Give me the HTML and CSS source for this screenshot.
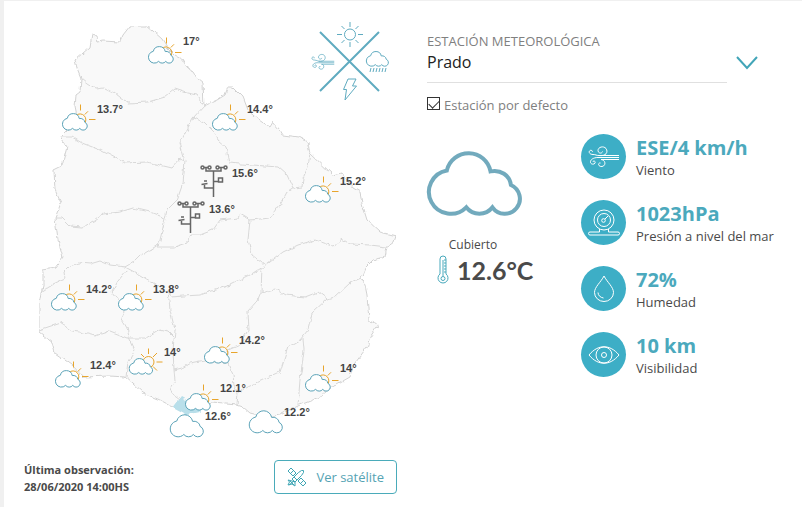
FILE: index.html
```html
<!DOCTYPE html>
<html lang="es">
<head>
    <meta charset="UTF-8">
    <meta name="viewport" content="width=device-width, initial-scale=1.0">
    <title>Estado del tiempo</title>
    <link rel="stylesheet" href="styles.css">
</head>
<body>
  <!-- shared icons -->
  <svg class="sprite" width="0" height="0" aria-hidden="true">
    <symbol id="cloud" viewBox="0 0 96 68" overflow="visible">
      <path vector-effect="non-scaling-stroke" d="M19 20A23 23 0 0 1 64 21A17 16 0 0 1 85 35A15.5 15.5 0 1 1 66 58A17 17 0 0 1 39 58A22.5 22.5 0 1 1 19 20Z"/>
    </symbol>
    <symbol id="sunCloud" viewBox="0 0 34 28">
      <path class="sun" d="M18.5 0.500V6.500M22.800 10.500l3.200-3.200M27 15.500h6.500M14 11.500A5.800 5.800 0 1 1 22 20"/>
      <use class="cloud" href="#cloud" x="0" y="9" width="26" height="18"/>
    </symbol>
    <symbol id="sunBig" viewBox="0 0 34 28">
      <path class="sun" d="M19.500 0.500V6M24 9l4-4M27.500 14h6M24 18.500l4 4M15 9l-3-3"/>
      <circle class="sun" cx="19.500" cy="14" r="5.500"/>
      <use class="cloud" href="#cloud" x="0" y="10" width="24" height="17"/>
    </symbol>
    <symbol id="tower" viewBox="0 0 28 33">
      <g fill="none" stroke="#666" stroke-width="1.500">
        <circle cx="2.500" cy="2.500" r="1.500"/><circle cx="9.500" cy="2.500" r="1.500"/>
        <circle cx="17.500" cy="2.500" r="1.500"/><circle cx="25.500" cy="2.500" r="1.500"/>
        <path d="M4 2.500h4M19 2.500h5M6 3v3h15V3M13.500 6v26M13.500 16.500h5M18.500 13h4v4h-4zM13.500 23h-9v-4M1.500 19.500l6-1M4 16l3 0"/>
      </g>
    </symbol>
    <symbol id="wind" viewBox="0 0 32 24">
      <path d="M31 11H12C8 11 8 9.500 5 9.500C2 9.500 0.500 7.500 1.500 6C2.500 4.500 5 5.500 4.300 7M31 13H10M31 15H14C18 15 18 21 14 21.500C10 22 9.500 17.500 12.500 18M10 11C18 12 20.500 7 18 3.500C15.500 0.500 10 2 10 5.500C10 8.500 14 9 14.500 6.500M10 13C5 12.500 2 15 2.500 17.500C3.200 20 7.500 19.500 7.200 17.200C7 15.500 4.800 15.700 5 17"/>
    </symbol>
  </svg>

  <main id="container">
    <section id="mapSection">
      <svg id="map" viewBox="24 16 373 430" role="img" aria-label="Mapa de estaciones">
        <filter id="rough" x="0" y="0" width="1" height="1">
          <feTurbulence type="fractalNoise" baseFrequency="0.150" numOctaves="2" seed="4"/>
          <feDisplacementMap in="SourceGraphic" scale="5" xChannelSelector="R" yChannelSelector="G"/>
        </filter>
        <g filter="url(#rough)">
          <path class="land" d="M92 34L96 36L97 42L103 41L120 42L123 35L130 26L147 26L153 31L162 39L167 47L175 55L182 59L187 67L193 72L197 78L203 83L204 106L217 100L225 95L228 87L233 87L243 97L248 110L260 120L270 127L273 122L280 130L283 135L298 137L307 142L310 153L333 175L342 173L353 188L360 192L363 207L367 220L380 232L396 236L394 242L387 247L385 257L373 260L365 268L361 278L365 285L367 295L369 320L379 324L370 337L367 348L353 367L350 377L327 390L323 396L300 405L280 415L266 417L250 413L243 407L237 405L213 403L187 412L173 407L160 400L143 393L132 383L125 377L110 376L83 377L72 365L55 353L52 342L39 332L39 303L41 293L43 287L43 270L55 268L63 257L58 240L55 218L61 203L55 190L54 170L62 166L67 147L61 137L70 128L77 117L75 107L76 95L80 92L81 78L77 68L75 60L90 47Z"/>
          <path class="border" d="M81 78L87 83L95 88L103 87L115 93L128 103L148 102L165 97L175 89L187 93L197 95L204 106
            M61 137L72 137L82 143L100 150L125 163L147 162L172 168L180 159L185 161
            M204 106L193 118L180 143L185 161L183 183L177 200L167 210L164 223L160 240L158 247
            M193 118L205 123L215 133L218 140L226 147L229 163L253 165L278 167L287 175L293 188L302 187L303 178L308 167L310 153L308 142
            M293 188L287 192L280 205L270 218L250 220L240 214L238 218L220 220L213 230L200 235L190 235L187 243L175 247L158 247
            M250 220L248 240L252 255L262 263L270 262L283 252L298 245L315 240L333 246L342 239L350 244L370 245L387 247
            M270 262L250 275L230 285L200 295L183 296L172 297L168 292L155 284L140 275L125 267L135 261L140 256L150 250L158 245
            M55 218L62 218L70 226L82 227L95 220L103 214L120 212L133 208L150 212L165 218
            M125 267L110 265L100 261L90 264L78 263L70 266L64 272L65 279L50 286L41 292
            M127 270L118 281L112 292L122 305L125 310L121 318L127 328L129 337
            M39 330L60 323L72 331L80 332L95 336L110 331L128 338L145 338L160 329L168 331L173 336
            M129 337L135 350L128 362L126 377
            M168 292L170 310L175 330L173 350L174 370L182 368L190 363L205 360L228 363M174 370L175 380L170 388L172 394L180 400
            M262 267L261 293L258 300L247 312L248 330L240 345L228 350L228 362L233 375L234 385L238 392L237 405
            M261 293L275 289L285 295L305 297L318 292L327 299L335 297L350 283L361 278
            M327 299L312 313L308 330L300 340L288 347L280 372L250 386L238 392M303 338L304 350L300 380L298 405"/>
          <path class="capital" d="M173 408L181 397L190 402L207 406L200 412L186 415Z"/>
        </g>

        <g class="compass">
          <path class="cross" d="M320 32L379 91M379 32L320 91"/>
          <circle cx="350" cy="34.500" r="5.500"/>
          <path d="M350 22v5M350 42v5M337 34.500h5M358 34.500h5M341.500 26l3 3M355.500 40l3 3M358.500 26l-3 3M344.500 40l-3 3"/>
          <use href="#cloud" x="366" y="51" width="23" height="16"/>
          <path d="M371 68l-1 4M374 68l-1 4M377 68l-1 4M380 68l-1 4M383 68l-1 4M386 68l-1 4"/>
          <path d="M348 79L356 79L352.500 86L356.500 86L345 100L346.500 89.500L343.500 89.500Z"/>
          <use href="#wind" x="311" y="53" width="24" height="18"/>
        </g>

        <!-- stations -->
        <g class="stations">
          <use href="#sunCloud" x="148" y="37" width="34" height="28"/><text x="183" y="45">17°</text>
          <use href="#sunCloud" x="62" y="104" width="34" height="28"/><text x="97" y="113">13.7°</text>
          <use href="#sunCloud" x="212" y="104" width="34" height="28"/><text x="247" y="113">14.4°</text>
          <use href="#tower" x="200" y="165" width="28" height="33"/><text x="232" y="177">15.6°</text>
          <use href="#sunCloud" x="305" y="176" width="34" height="28"/><text x="340" y="185">15.2°</text>
          <use href="#tower" x="177" y="201" width="28" height="33"/><text x="209" y="213">13.6°</text>
          <use href="#sunCloud" x="51" y="284" width="34" height="28"/><text x="86" y="293">14.2°</text>
          <use href="#sunCloud" x="118" y="284" width="34" height="28"/><text x="153" y="293">13.8°</text>
          <use href="#sunCloud" x="55" y="361" width="34" height="28"/><text x="90" y="369">12.4°</text>
          <use href="#sunBig" x="129" y="348" width="34" height="28"/><text x="164" y="356">14°</text>
          <use href="#sunCloud" x="204" y="337" width="34" height="28"/><text x="239" y="344">14.2°</text>
          <use href="#sunCloud" x="305" y="365" width="34" height="28"/><text x="340" y="372">14°</text>
          <use href="#sunCloud" x="185" y="384" width="34" height="28"/><text x="220" y="392">12.1°</text>
          <use class="cloud" href="#cloud" x="170" y="414" width="34" height="24"/><text x="205" y="420">12.6°</text>
          <use class="cloud" href="#cloud" x="249" y="410" width="34" height="24"/><text x="284" y="416">12.2°</text>
        </g>
      </svg>

      <div id="mapFooter">
        <p>Última observación:<br>28/06/2020 14:00HS</p>
        <button type="button" id="satelliteBtn">
          <svg width="20" height="20" viewBox="0 0 20 20" aria-hidden="true">
            <path d="M1 4l3-3 5 5-3 3zM3.500 6.500l3-3M11 14l3-3 5 5-3 3zM13.500 16.500l3-3M5 12L11.500 5.500Q15 2.500 16.500 3.500Q17.500 5 14.500 8.500L8 15ZM7 10l3 3M1 13l4 1 3 1 0 4-3-2-4 1 1.500-3zM3 14l4 4M2 18l5-4"/>
          </svg>
          Ver satélite
        </button>
      </div>
    </section>

    <section id="stationSection">
      <label class="stationLabel" for="station">ESTACIÓN METEOROLÓGICA</label>
      <div class="stationPicker">
        <select name="station" id="station">
          <option>Prado</option>
        </select>
        <svg width="24" height="16" viewBox="0 0 24 16" aria-hidden="true"><path d="M2 2l10 11L22 2"/></svg>
      </div>
      <div class="defaultStation">
        <input type="checkbox" id="defaultStation" checked>
        <label for="defaultStation">Estación por defecto</label>
      </div>

      <div id="weather">
        <div class="current">
          <svg class="bigCloud" width="96" height="68" aria-hidden="true"><use href="#cloud" x="1" y="1" width="94" height="66"/></svg>
          <p>Cubierto</p>
          <div class="temperature">
            <svg width="12" height="30" viewBox="0 0 12 30" aria-hidden="true">
              <path d="M3 19V4a3 3 0 0 1 6 0v15a5 5 0 1 1-6 0zM6 5v16M7 5h2M7 8h2M7 11h2M7 14h2M7 17h2"/>
              <circle cx="6" cy="23.500" r="2"/>
            </svg>
            <span>12.6°C</span>
          </div>
        </div>

        <ul class="metrics">
          <li>
            <span class="icon"><svg class="windIcon" width="32" height="24" viewBox="0 0 32 24">
                <path d="M31 10.500H11C8 10.500 8 9.500 5 9.500C2 9.500 0.500 7.500 1.500 6C2.500 4.500 5 5.500 4.300 7M31 12.500H10M31 14.500H13C18 15 18 21 14 21.500C10 22 9.500 17.500 12.500 18M11 10.500C18 11.500 20.500 7 18 3.500C15.500 0.500 10 2 10 5.500C10 8.500 14 9 14.500 6.500M10 12.500C5 12.500 2 15 2.500 17.500C3.200 20 7.500 19.500 7.200 17.200C7 15.500 4.800 15.700 5 17"/>
            </svg></span>
            <div><strong>ESE/4 km/h</strong><span>Viento</span></div>
          </li>
          <li>
            <span class="icon">
              <svg width="32" height="28" viewBox="0 0 32 28">
                <circle cx="16" cy="11" r="10"/><circle cx="16" cy="11" r="6.500"/><circle cx="15.500" cy="11.500" r="1.800"/>
                <path d="M17 10l3-3M11.500 20v3H2a1.200 1.200 0 0 0 0 3h28a1.200 1.200 0 0 0 0-3h-9.500v-3"/>
              </svg>
            </span>
            <div><strong>1023hPa</strong><span>Presión a nivel del mar</span></div>
          </li>
          <li>
            <span class="icon">
              <svg width="22" height="28" viewBox="0 0 22 28">
                <path d="M11 1C8 7 1.500 12 1.500 17.500a9.500 9 0 0 0 19 0C20.500 12 14 7 11 1zM5 17.500c0 3 2.500 5 5.500 5.500"/>
              </svg>
            </span>
            <div><strong>72%</strong><span>Humedad</span></div>
          </li>
          <li>
            <span class="icon">
              <svg width="32" height="20" viewBox="0 0 32 20">
                <path d="M1 10C10-1 22-1 31 10C22 21 10 21 1 10z"/><circle cx="16" cy="10" r="8"/><circle cx="16" cy="10" r="2.500"/>
              </svg>
            </span>
            <div><strong>10 km</strong><span>Visibilidad</span></div>
          </li>
        </ul>
      </div>
    </section>
  </main>
</body>
</html>
```
FILE: styles.css
```css
*
{
    box-sizing: border-box;
}
body
{
    margin: 0;
    min-height: 100vh;
    border-top: 1px solid #f0f0f0;
    border-left: 4px solid #f0f0f0;
    background-color: #fff;
    color: #4a4a4a;
    font-family: "Open Sans", sans-serif;
    font-size: 13px;
    line-height: 20px;
}
p
{
    margin: 0;
}
svg
{
    fill: none;
    flex-shrink: 0;
}
.sprite
{
    position: absolute;
}
#container
{
    display: grid;
    grid-template-columns: 373fr 355fr;
    column-gap: 30px;
    padding: 15px 20px 12px;
}

/* map */
#map
{
    display: block;
    width: 100%;
    overflow: visible;
}
.land
{
    fill: #f9f9f9;
    stroke: #d2d2d2;
}
.border
{
    stroke: #d8d8d8;
}
.capital
{
    fill: #b9dfea;
}
.compass
{
    stroke: #5fabc0;
    stroke-width: 1;
}
.cross
{
    stroke-width: 2;
}
.sun
{
    stroke: #e8a52c;
    stroke-width: 1;
}
.cloud
{
    fill: #fff;
    stroke: #5ba3b8;
    stroke-width: 1;
}
.stations text
{
    fill: #444;
    font-family: "Liberation Sans", Arial, sans-serif;
    font-size: 11px;
    font-weight: bold;
}
#mapFooter
{
    display: flex;
    justify-content: space-between;
    align-items: center;
    margin-top: 13px;
}
#mapFooter p
{
    padding-top: 2px;
    font-size: 11px;
    font-weight: bold;
    line-height: 17px;
}
#satelliteBtn
{
    display: flex;
    align-items: center;
    gap: 9px;
    height: 34px;
    padding: 0 12px;
    border: 1px solid #4aabba;
    border-radius: 4px;
    background-color: #fff;
    color: #55a3b3;
    font-family: inherit;
    font-size: 13px;
}
#satelliteBtn svg
{
    stroke: #3fa6b5;
}

/* station */
#stationSection
{
    padding-top: 15px;
}
.stationLabel
{
    display: block;
    color: #808080;
    font-size: 13px;
}
.stationPicker
{
    display: flex;
    align-items: center;
    gap: 8px;
}
#station
{
    appearance: none;
    width: 300px;
    height: 32px;
    padding: 0 0 10px;
    border: 0;
    border-bottom: 1px solid #e0e0e0;
    border-radius: 0;
    background-color: #fff;
    color: #222;
    font-family: inherit;
    font-size: 16px;
}
.stationPicker svg
{
    margin-bottom: 8px;
    stroke: #42a5b8;
    stroke-width: 2;
}
.defaultStation
{
    display: flex;
    align-items: center;
    gap: 4px;
    margin-top: 12px;
    color: #808080;
}
#defaultStation
{
    appearance: none;
    width: 13px;
    height: 13px;
    margin: 0 0 4px;
    border: 1px solid #333;
    background-color: #fff;
}
#defaultStation:checked::before
{
    content: "";
    display: block;
    width: 9px;
    height: 5px;
    margin: 2px 1px;
    border-left: 1px solid #333;
    border-bottom: 1px solid #333;
    transform: rotate(-45deg);
}
#weather
{
    display: flex;
    margin-top: 19px;
}
.current
{
    width: 154px;
    padding-top: 16px;
}
.bigCloud
{
    display: block;
    overflow: visible;
    stroke: #72aabd;
    stroke-width: 4;
}
.current p
{
    width: 92px;
    margin-top: 17px;
    font-size: 12px;
    text-align: center;
}
.temperature
{
    display: flex;
    align-items: center;
    gap: 8px;
    padding-left: 10px;
    font-family: Lato, sans-serif;
    font-size: 25px;
    font-weight: bold;
    line-height: 30px;
}
.temperature svg
{
    stroke: #48a9bc;
}
.metrics
{
    display: grid;
    gap: 20px;
    margin: 0;
    padding: 0;
    list-style: none;
}
.metrics li
{
    display: flex;
    gap: 10px;
}
.metrics div
{
    padding-top: 2px;
}
.metrics strong, .metrics div span
{
    display: block;
}
.metrics strong
{
    color: #4ba9bd;
    font-size: 20px;
    line-height: 24px;
}
.icon
{
    display: flex;
    flex-shrink: 0;
    align-items: center;
    justify-content: center;
    width: 45px;
    height: 45px;
    border-radius: 50%;
    background-color: #3daec6;
}
.icon svg
{
    stroke: #fff;
}
.icon .windIcon
{
    margin-top: 1px;
}
```
